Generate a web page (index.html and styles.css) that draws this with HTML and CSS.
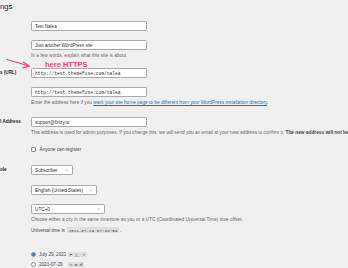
FILE: index.html
```html
<!DOCTYPE html>
<html>
  <head>
    <title>General Settings</title>
    <link rel="stylesheet" href="styles.css">
  </head>
  <body>
    <div class="wrap">
      <h1 class="title">ngs</h1>

      <div class="row row-title">
        <div class="label"></div>
        <div class="field"><div class="input">Test Nalea</div></div>
      </div>

      <div class="row row-tagline">
        <div class="label"></div>
        <div class="field">
          <div class="input">Just another WordPress site</div>
          <p class="desc">In a few words, explain what this site is about.</p>
        </div>
      </div>

      <div class="row row-url">
        <div class="label">s (URL)</div>
        <div class="field"><div class="input mono">http://test.themefuse.com/nalea</div></div>
      </div>

      <div class="row row-home">
        <div class="label"></div>
        <div class="field">
          <div class="input mono">http://test.themefuse.com/nalea</div>
          <p class="desc">Enter the address here if you <a href="#">want your site home page to be different from your WordPress installation directory</a>.</p>
        </div>
      </div>

      <div class="row row-email">
        <div class="label">l Address</div>
        <div class="field">
          <div class="input">support@brizy.io</div>
          <p class="desc">This address is used for admin purposes. If you change this, we will send you an email at your new address to confirm it. <strong>The new address will not become active until confirmed.</strong></p>
        </div>
      </div>

      <div class="row row-check">
        <div class="label"></div>
        <div class="field">
          <label class="check"><span class="box"></span>Anyone can register</label>
        </div>
      </div>

      <div class="row row-role">
        <div class="label">ole</div>
        <div class="field">
          <div class="select sel-role">Subscriber
            <svg class="chev" viewBox="0 0 6 4"><path d="M1 1 L3 3 L5 1" /></svg>
          </div>
        </div>
      </div>

      <div class="row row-lang">
        <div class="label"></div>
        <div class="field">
          <div class="select sel-lang">English (United States)
            <svg class="chev" viewBox="0 0 6 4"><path d="M1 1 L3 3 L5 1" /></svg>
          </div>
        </div>
      </div>

      <div class="row row-tz">
        <div class="label"></div>
        <div class="field">
          <div class="select sel-tz">UTC+0
            <svg class="chev" viewBox="0 0 6 4"><path d="M1 1 L3 3 L5 1" /></svg>
          </div>
          <p class="desc">Choose either a city in the same timezone as you or a UTC (Coordinated Universal Time) time offset.</p>
          <p class="time">Universal time is <code>2021-07-29 07:48:59</code>.</p>
        </div>
      </div>

      <div class="row row-date">
        <div class="label"></div>
        <div class="field">
          <label class="radio"><span class="dot on"></span><span class="date-text">July 29, 2021</span><code>F j, Y</code></label>
          <label class="radio"><span class="dot"></span><span class="date-text">2021-07-29</span><code>Y-m-d</code></label>
        </div>
      </div>

      <svg class="arrow" viewBox="0 0 26 12">
        <path d="M1 1.5 L23 8" />
        <path d="M17.5 4.2 L23.2 8 L16.8 9.8" />
      </svg>
      <div class="note">here HTTPS</div>
    </div>
  </body>
</html>
```

FILE: styles.css
```css
body { margin: 0; background: #f0f0f1; overflow: hidden; font-family: "Liberation Sans", Arial, sans-serif; color: #3c434a; }

.wrap { position: relative; width: 640px; }
.title { margin: 0; height: 16px; padding-top: 2px; box-sizing: border-box; font-size: 7.7px; line-height: 10px; font-weight: 400; color: #1d2327; }

.row { display: grid; grid-template-columns: 31px 1fr; padding: 5px 0 4px; }
.label { font-size: 4.6px; line-height: 10px; font-weight: 700; color: #1d2327; white-space: nowrap; }
.field { min-width: 0; }

.input { width: 116px; height: 10px; box-sizing: border-box; background: #fff; border: 0.5px solid #a7aaad; border-radius: 1.3px; padding: 0 3px; font-size: 4.6px; line-height: 9px; color: #2c3338; white-space: nowrap; }
.mono { font-family: "Liberation Mono", "DejaVu Sans Mono", monospace; }

.desc { margin: 2.5px 0 0; font-size: 4.75px; line-height: 6px; color: #646970; white-space: nowrap; }
.desc a { color: #2271b1; }
.desc strong { color: #3c434a; }

.row-tagline { padding-bottom: 4.5px; }
.row-url { padding-bottom: 4px; }
.row-home { padding-bottom: 6.5px; }
.row-email { padding-bottom: 4.5px; }

.row-check { padding: 6.5px 0 7.5px; }
.check { display: flex; align-items: center; gap: 3.5px; height: 6px; font-size: 4.7px; color: #3c434a; }
.box { width: 5px; height: 5px; box-sizing: border-box; background: #fff; border: 0.5px solid #8c8f94; border-radius: 1px; }

.select { position: relative; height: 10px; box-sizing: border-box; background: #fff; border: 0.5px solid #a7aaad; border-radius: 1.3px; padding: 0 3px; font-size: 4.7px; line-height: 9px; color: #2c3338; white-space: nowrap; }
.chev { position: absolute; right: 3.5px; top: 3.3px; width: 3.4px; height: 2.4px; fill: none; stroke: #50575e; stroke-width: 0.8px; }
.sel-role { width: 42px; }
.sel-lang { width: 66px; }
.sel-tz { width: 74px; }

.row-role { padding: 5px 0; }
.row-lang { padding: 5px 0 4px; }
.row-tz { padding: 5px 0 4px; }

.time { margin: 5.5px 0 0; font-size: 4.6px; line-height: 6px; color: #3c434a; }
code { font-family: "Liberation Mono", "DejaVu Sans Mono", monospace; font-size: 4.3px; background: rgba(0, 0, 0, 0.07); padding: 0.6px 1.7px 0.4px; margin: 0 0.8px; color: #3c434a; }

.row-date { padding-top: 11.5px; }
.radio { display: flex; align-items: center; height: 10px; font-size: 4.6px; color: #3c434a; }
.dot { width: 5px; height: 5px; box-sizing: border-box; border-radius: 50%; background: #fff; border: 0.5px solid #8c8f94; margin-right: 3px; display: flex; align-items: center; justify-content: center; }
.dot.on::before { content: ""; width: 2.2px; height: 2.2px; border-radius: 50%; background: #3582c4; }
.date-text { width: 28px; }

.arrow { position: absolute; left: 6px; top: 58px; width: 26px; height: 12px; fill: none; stroke: #f0437b; stroke-width: 1.2px; stroke-linecap: round; stroke-linejoin: round; }
.note { position: absolute; left: 45px; top: 60px; font-size: 7.5px; line-height: 9px; font-weight: 700; color: #f0437b; }
```
